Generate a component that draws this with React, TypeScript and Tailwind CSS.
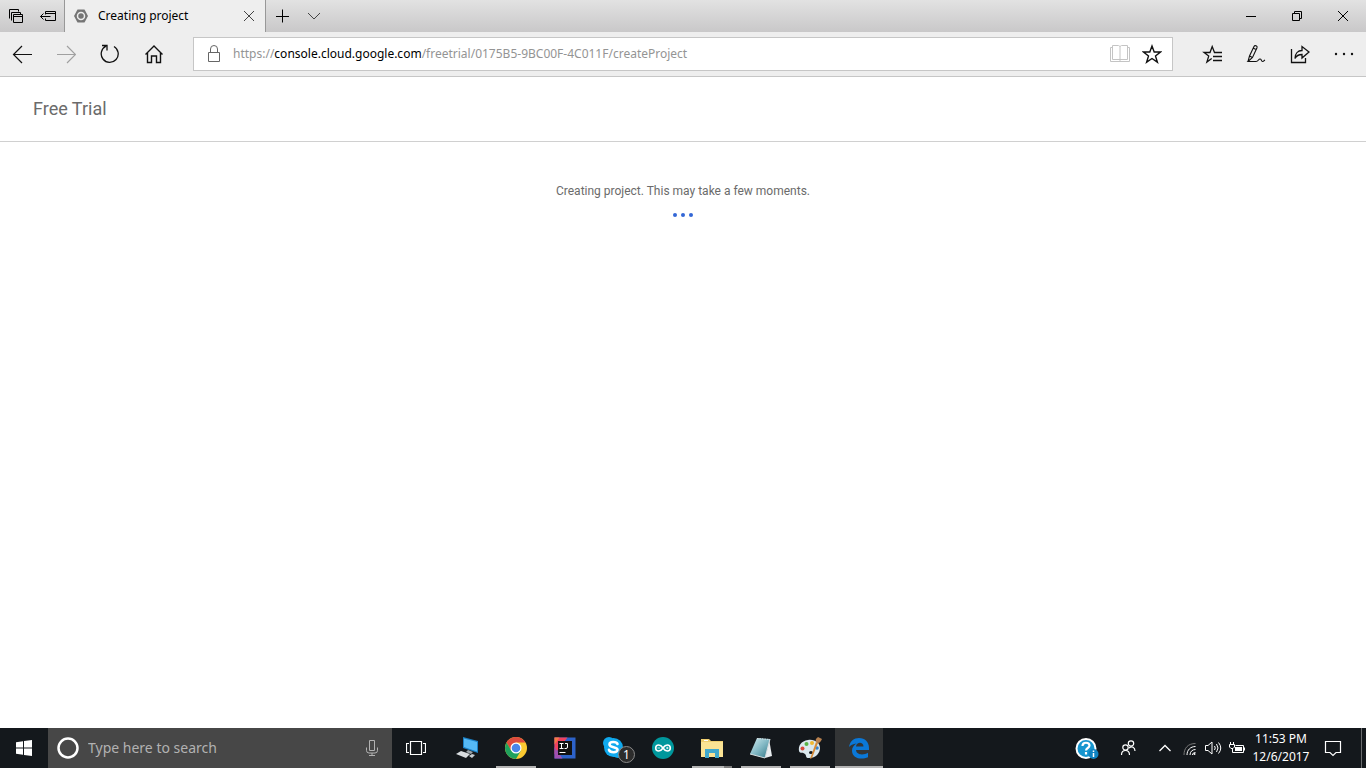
import { ReactNode, useState } from 'react';

type IconProps = { w?: number; h?: number; className?: string; children: ReactNode };

function Icon({ w = 20, h = 20, className = '', children }: IconProps) {
  return (
    <svg
      width={w}
      height={h}
      viewBox={`0 0 ${w} ${h}`}
      fill="none"
      stroke="currentColor"
      className={`shrink-0 ${className}`}
      aria-hidden="true"
    >
      {children}
    </svg>
  );
}

type ButtonProps = { label: string; className?: string; children: ReactNode };

function IconButton({ label, className = '', children }: ButtonProps) {
  return (
    <button aria-label={label} className={`flex items-center justify-center shrink-0 ${className}`}>
      {children}
    </button>
  );
}

function TabBar() {
  return (
    <div className="flex h-8 bg-linear-to-b from-[#e2e2e2] to-[#c9c8c9] text-black">
      <IconButton label="Tabs you've set aside" className="w-8">
        <Icon w={16} h={16}>
          <path d="M1.500 10.500v-9h9v2M3.500 12.500v-8h9v2" />
          <path d="M5.500 6.500h9v8h-9zM5.500 8.500h9" />
        </Icon>
      </IconButton>
      <IconButton label="Set these tabs aside" className="w-8">
        <Icon w={16} h={16}>
          <path d="M5.500 6.500V3.500h10v9h-10V10.500M5.500 5.500h10M.5 8.500h10M3.500 5.500l-3 3 3 3" />
        </Icon>
      </IconButton>
      <div className="flex items-center w-[202px] pl-2 border-x border-[#989898] bg-[#eeeeee]">
        <Icon w={16} h={16} className="mr-[9px]">
          <path d="M4.500 1.500h7L15 8l-3.500 6.500h-7L1 8z" fill="#757575" stroke="none" />
          <circle cx="8" cy="8" r="3.500" stroke="#eee" strokeWidth="1.500" />
          <circle cx="8" cy="8" r="1.500" fill="#757575" stroke="none" />
        </Icon>
        <span className="grow text-[12px] leading-4 whitespace-nowrap">Creating project</span>
        <IconButton label="Close tab" className="w-8 h-8">
          <Icon w={12} h={12} className="text-[#444]">
            <path d="M1 1l10 10M11 1L1 11" />
          </Icon>
        </IconButton>
      </div>
      <IconButton label="New tab" className="w-8">
        <Icon w={14} h={14}>
          <path d="M7.500 .5v13M1 7.500h13" />
        </Icon>
      </IconButton>
      <IconButton label="Show tab previews" className="w-8">
        <Icon w={14} h={8} className="text-[#444]">
          <path d="M1 1l6 6 6-6" />
        </Icon>
      </IconButton>
      <div className="flex ml-auto">
        <IconButton label="Minimize" className="w-[46px]">
          <Icon w={10} h={10}>
            <path d="M0 5.500h10" />
          </Icon>
        </IconButton>
        <IconButton label="Restore" className="w-[46px]">
          <Icon w={10} h={10}>
            <path d="M.5 2.500h7v7h-7zM2.500 2.500v-2h7v7h-2" />
          </Icon>
        </IconButton>
        <IconButton label="Close" className="w-[46px]">
          <Icon w={12} h={12}>
            <path d="M1 1l10 10M11 1L1 11" />
          </Icon>
        </IconButton>
      </div>
    </div>
  );
}

function Toolbar() {
  return (
    <div className="flex items-center h-[45px] border-b border-[#c6c6c6] bg-[#eeeeee] text-[#111]">
      <IconButton label="Back" className="w-11 h-11">
        <Icon>
          <path d="M1.500 10.500H20M10 2l-8.500 8.500L10 19" strokeWidth="1.200" />
        </Icon>
      </IconButton>
      <IconButton label="Forward" className="w-11 h-11 text-[#a0a0a0]">
        <Icon>
          <path d="M1 10.500h18.500M11 2l8.500 8.500L11 19" strokeWidth="1.200" />
        </Icon>
      </IconButton>
      <IconButton label="Refresh" className="w-11 h-11">
        <Icon>
          <path d="M14 2.500a8.500 8.500 0 1 1-8-.3M2 1.500h5v5" strokeWidth="1.300" />
        </Icon>
      </IconButton>
      <IconButton label="Home" className="w-11 h-11">
        <Icon>
          <path
            d="M1.500 10.500L10 2l8.500 8.500M3.500 9v9.500h4V12h5v6.500h4V9"
            strokeWidth="1.400"
          />
        </Icon>
      </IconButton>

      <div className="flex items-center grow h-[34px] mx-[17px] pl-3 pr-1 border border-[#c6c6c6] bg-white">
        <Icon w={16} h={20} className="mr-[11px] text-[#666]">
          <path d="M2.500 8.500h11v9h-11zM4.500 8.500V5a3.500 3.500 0 0 1 7 0v3.500" />
        </Icon>
        <a
          href="https://console.cloud.google.com/freetrial/0175B5-9BC00F-4C011F/createProject"
          className="grow text-[12px] leading-4 text-[#949494] whitespace-nowrap"
        >
          https://<span className="text-black">console.cloud.google.com</span>
          /freetrial/0175B5-9BC00F-4C011F/createProject
        </a>
        <IconButton label="Reading view" className="w-8 h-8 text-[#c4c4c4]">
          <Icon>
            <path d="M2.500 1.500h6l1.500 1 1.500-1h6v14h-15zM10 2.500v15M2.500 3.500h-2v14h19v-14h-2" />
          </Icon>
        </IconButton>
        <IconButton label="Add to favorites" className="w-8 h-8">
          <Icon>
            <path
              d="M10 2l2.200 6h6.300l-5 4 1.900 6.200L10 14.500l-5.400 3.700L6.500 12l-5-4h6.300z"
              strokeWidth="1.400"
            />
          </Icon>
        </IconButton>
      </div>

      <IconButton label="Hub" className="w-11 h-11">
        <Icon>
          <path
            d="M20 8.500h-7.500L10.200 2.500 8 8.500H2l4.700 3.600-1.800 6 4.800-3.600M11 12.500h9M11 16.500h9"
            strokeWidth="1.300"
          />
        </Icon>
      </IconButton>
      <IconButton label="Make a web note" className="w-11 h-11">
        <Icon>
          <path
            d="M2 17.500L3.500 12 8 2.500c.8-1.600 3.700-.6 3 1.300L6.500 13.500 2 17.500h8c2.500 0 2.500-3 4.200-2.500s.8 2.500 2.300 2.500 1.500-1 2.500-1.500M7.300 4.300l2.900 1.300M3.500 12l3 1.500"
            strokeWidth="1.100"
          />
        </Icon>
      </IconButton>
      <IconButton label="Share" className="w-11 h-11">
        <Icon>
          <path
            d="M1.500 5v13.500h14V14M5 14.500C5 9.500 8 6.500 12 6.500V2.500l7 5.500-7 6v-3.500c-3 0-5.500 1-7 4z"
            strokeWidth="1.300"
          />
        </Icon>
      </IconButton>
      <IconButton label="More" className="w-11 h-11">
        <Icon>
          <g fill="currentColor" stroke="none">
            <circle cx="2" cy="10" r="1.200" />
            <circle cx="10" cy="10" r="1.200" />
            <circle cx="18" cy="10" r="1.200" />
          </g>
        </Icon>
      </IconButton>
    </div>
  );
}

function TrialPage() {
  return (
    <main className="grow bg-white font-[Roboto,sans-serif] text-[#6b6b6b]">
      <header className="flex items-center h-[65px] px-[33px] border-b border-[#d0d0d0]">
        <h1 className="text-[18px] leading-6">Free Trial</h1>
      </header>
      <div className="flex flex-col items-center pt-10">
        <p className="text-[12px] leading-[18px]">Creating project. This may take a few moments.</p>
        <div className="flex gap-1 mt-[13px]" role="progressbar" aria-label="Creating project">
          <span className="size-1 rounded-full bg-[#3367d6]" />
          <span className="size-1 rounded-full bg-[#3367d6]" />
          <span className="size-1 rounded-full bg-[#3367d6]" />
        </div>
      </div>
    </main>
  );
}

function ComputerIcon() {
  return (
    <Icon w={24} h={24}>
      <g stroke="none">
        <path d="M8 1l15 4v12L8 12z" fill="#1b7fc4" />
        <path d="M9 2.500l13 3.500v9.500L9 11z" fill="#55b9f5" />
        <path d="M13 14l5 2-2 2-5-2z" fill="#9aa4ab" />
        <path d="M1 18l5-3 9 3-4 4z" fill="#d9dde0" />
        <path d="M14 20l3-2 3 1-3 3z" fill="#c5cbd0" />
      </g>
    </Icon>
  );
}

function ChromeIcon() {
  return (
    <Icon w={24} h={24}>
      <g stroke="none">
        <circle cx="12" cy="12" r="11" fill="#fbc931" />
        <path d="M2.500 6.500A11 11 0 0 1 21.500 6.500H12L7.200 14.800z" fill="#dd4b3e" />
        <path d="M2.500 6.500A11 11 0 0 0 12 23l4.800-8.300H7.200z" fill="#1fa15d" />
        <circle cx="12" cy="12" r="5.500" fill="#fff" />
        <circle cx="12" cy="12" r="4.300" fill="#4a86e8" />
      </g>
    </Icon>
  );
}

function IntelliJIcon() {
  return (
    <Icon w={24} h={24}>
      <g stroke="none">
        <path d="M1.500 1.500h21v21h-21z" fill="#2d62c9" />
        <path d="M1.500 1.500h13l-13 17z" fill="#f0425f" />
        <path d="M1.500 11l8 11.500h-8z" fill="#a04fb0" />
        <path d="M1.500 1.500h5l-5 7z" fill="#f47b43" />
        <path d="M5 5h14v14H5z" fill="#111" />
      </g>
      <path d="M6.500 7.500h4M8.500 7.500v5M6.500 12.500h4M12 7.500h2.500V11q0 1.500-1.500 1.500h-1.500" stroke="#fff" />
      <path d="M6.500 16.500h6" stroke="#fff" />
    </Icon>
  );
}

function SkypeIcon() {
  return (
    <span className="relative flex">
      <Icon w={24} h={24}>
        <g stroke="none" fill="#10a9ee">
          <circle cx="11.500" cy="11.500" r="9.500" />
          <circle cx="7" cy="7" r="6" />
          <circle cx="16" cy="16" r="6" />
        </g>
        <path
          d="M15.500 8c-1-2.500-8-2.800-8 .5 0 3.500 8 2 8 5.300 0 3.500-7.500 3-8.500 0"
          stroke="#fff"
          strokeWidth="2.600"
          strokeLinecap="round"
        />
      </Icon>
      <span className="absolute left-4 top-2.5 flex items-center justify-center size-[17px] rounded-full border border-[#8a8a8a] bg-[#2c2c2c] text-[12px] leading-none text-white">
        1
      </span>
    </span>
  );
}

function ArduinoIcon() {
  return (
    <Icon w={24} h={24}>
      <circle cx="12" cy="12" r="11" fill="#00979c" stroke="none" />
      <path
        d="M12 12C10 9 9 9 7.700 9a3 3 0 0 0 0 6C9 15 10 15 12 12s3-3 4.300-3a3 3 0 0 1 0 6C15 15 14 15 12 12z"
        stroke="#fff"
        strokeWidth="1.600"
      />
      <path d="M6.500 12h2.500M15 12h2.500M16.300 10.800v2.400" stroke="#fff" strokeWidth=".8" />
    </Icon>
  );
}

function ExplorerIcon() {
  return (
    <Icon w={24} h={24}>
      <g stroke="none">
        <path d="M1 3h8l2 2h12v16H1z" fill="#f0cf70" />
        <path d="M1 6h22v15H1z" fill="#fbe394" />
        <path d="M4 4h4v1H4z" fill="#fff" />
        <path d="M5 13h14v9h-4v-5H9v5H5z" fill="#41a9cd" />
      </g>
    </Icon>
  );
}

function NotepadIcon() {
  return (
    <Icon w={24} h={24}>
      <defs>
        <linearGradient id="sheet" x1="0" y1="0" x2="1" y2="1">
          <stop offset="0" stopColor="#d5eef2" />
          <stop offset=".5" stopColor="#83b9c5" />
          <stop offset="1" stopColor="#2f7585" />
        </linearGradient>
      </defs>
      <g stroke="none">
        <path d="M20 3l3 17-7 2z" fill="#e9edf0" />
        <path d="M8 2l13 1-5 19-15-4z" fill="url(#sheet)" />
      </g>
      <path d="M8 2.500l13 1" stroke="#d7dfe2" strokeDasharray="1.500 1" />
      <path d="M1 18l15 4 5-19" stroke="#d7dfe2" />
    </Icon>
  );
}

function PaintIcon() {
  return (
    <Icon w={26} h={24}>
      <g stroke="none">
        <path
          d="M11 4C4 5 1 10 2 15c1 3 4 1 6 3s0 4 4 4c7 0 11-5 11-10S18 3 11 4zM14 15a2 1.500 0 1 1 0 3 2 1.500 0 0 1 0-3z"
          fill="#dbe8ee"
          fillRule="evenodd"
        />
        <circle cx="5.500" cy="12.500" r="2" fill="#d9483b" />
        <circle cx="9.500" cy="8" r="2" fill="#59b347" />
        <circle cx="15" cy="7" r="2" fill="#f0b731" />
        <circle cx="20" cy="12" r="1.800" fill="#3484ce" />
        <path d="M19 6l2 1-6 15-2 1z" fill="#d58a38" />
        <path d="M19 6c-1-3 1-4 2-5l4 2c-1 2-2 4-4 4z" fill="#b8814f" />
      </g>
    </Icon>
  );
}

function EdgeIcon() {
  return (
    <Icon w={24} h={24}>
      <path
        d="M2 11C3 5 7 2 12 2c6 0 10 4 10 10v2H9c.3 5 7.500 5.500 12 2.700v4.500C15 24 5 23 5 14.500c0-3 2-5.500 4.500-7C6 8 3.500 9 2 11zM9 10.500h7.500C16.500 5.500 9.500 5.500 9 10.500z"
        fill="#0b78d7"
        stroke="none"
      />
    </Icon>
  );
}

const apps = [
  { name: 'This PC', icon: <ComputerIcon />, running: false },
  { name: 'Google Chrome', icon: <ChromeIcon />, running: true },
  { name: 'IntelliJ IDEA', icon: <IntelliJIcon />, running: false },
  { name: 'Skype', icon: <SkypeIcon />, running: false },
  { name: 'Arduino', icon: <ArduinoIcon />, running: false },
  { name: 'File Explorer', icon: <ExplorerIcon />, running: true, stacked: true },
  { name: 'Notepad', icon: <NotepadIcon />, running: true },
  { name: 'Paint', icon: <PaintIcon />, running: true },
  { name: 'Microsoft Edge', icon: <EdgeIcon />, running: true, active: true },
];

function Tray() {
  return (
    <div className="flex items-center h-10 ml-auto text-white">
      <IconButton label="Help" className="w-8 h-10">
        <Icon w={24} h={24}>
          <circle cx="11" cy="12.500" r="9.500" fill="#1796cf" stroke="#fff" strokeWidth="2" />
          <path d="M7.500 10c0-4.500 7-4 7-.5 0 2.500-3.500 2.500-3.500 5M11 16v2.500" stroke="#fff" strokeWidth="2.200" />
          <circle cx="18.500" cy="18" r="5" fill="#0f83c2" stroke="none" />
          <path d="M18.500 14.500V16M18.500 17v4" stroke="#fff" strokeWidth="1.500" />
        </Icon>
      </IconButton>
      <IconButton label="People" className="w-[50px] h-10">
        <Icon w={16} h={16}>
          <circle cx="11" cy="3.500" r="2.700" strokeWidth="1.200" />
          <circle cx="5.500" cy="7.500" r="2.700" strokeWidth="1.200" />
          <path d="M1.500 15c0-6 8-6 8 0M9 8c3-2.500 6-.5 6 3" strokeWidth="1.200" />
        </Icon>
      </IconButton>
      <IconButton label="Show hidden icons" className="w-6 h-10">
        <Icon w={14} h={8}>
          <path d="M1.500 7L7 1.500 12.500 7" strokeWidth="1.300" />
        </Icon>
      </IconButton>
      <IconButton label="Network" className="w-6 h-10">
        <Icon w={14} h={14}>
          <path d="M2 14C2 7 6 2.500 13.500 2.500" stroke="#777" />
          <path d="M5 14c0-5 3.500-8.500 8.500-8.500M8 14c0-3.500 2.500-5.500 5.500-5.500M10.500 14c0-1.500 1-2.500 3-2.500" />
          <circle cx="12.500" cy="13" r="1" fill="#fff" stroke="none" />
        </Icon>
      </IconButton>
      <IconButton label="Volume" className="w-6 h-10">
        <Icon w={18} h={14}>
          <path d="M1.500 4.500h2.500l4-3.500v12l-4-3.500H1.500zM10.500 5q1.500 2 0 4M12.500 3q3 4 0 8M14.500 1.500q4.500 5.500 0 11" />
        </Icon>
      </IconButton>
      <IconButton label="Battery" className="w-6 h-10">
        <Icon w={16} h={14}>
          <path d="M6.500 4.500h8v7H3.500V7.500M15.500 6.500v3M1.500 1v2M4.500 1v2M.5 3.500h5V6L4 7.500H2L.5 6z" />
          <path d="M6 6h7v4H6z" fill="#fff" stroke="none" />
        </Icon>
      </IconButton>
      <button className="w-16 h-10 text-center text-[12px] leading-[18px] whitespace-nowrap">
        <time dateTime="2017-12-06T23:53" className="block">
          11:53 PM
          <br />
          12/6/2017
        </time>
      </button>
      <IconButton label="Notifications" className="w-10 h-10">
        <Icon w={18} h={18}>
          <path d="M1.500 2.500h15v11H12l-3 3-3-3H1.500z" strokeWidth="1.200" />
        </Icon>
      </IconButton>
      <button aria-label="Show desktop" className="w-[5px] h-10 ml-2 border-l border-[#6a6c6e]" />
    </div>
  );
}

function Taskbar() {
  const [query, setQuery] = useState('');

  return (
    <footer className="flex items-center h-10 bg-[#14181c] text-white">
      <IconButton label="Start" className="w-12 h-10">
        <Icon w={16} h={16}>
          <path
            d="M0 2.300l7-1v6.200H0zM8 1.100L16 0v7.500H8zM0 8.500h7v6.200l-7-1zM8 8.500h8V16l-8-1.100z"
            fill="#fff"
            stroke="none"
          />
        </Icon>
      </IconButton>
      <div className="flex items-center w-[344px] h-10 pl-2 pr-3 bg-[#474747]">
        <Icon w={24} h={24} className="mr-2">
          <circle cx="12" cy="12" r="9.500" stroke="#fff" strokeWidth="2.500" />
        </Icon>
        <input
          type="text"
          aria-label="Search"
          placeholder="Type here to search"
          value={query}
          onChange={(e) => setQuery(e.target.value)}
          className="grow min-w-0 bg-transparent text-[14px] leading-5 outline-none placeholder:text-[#b2b2b2]"
        />
        <IconButton label="Speak to search" className="text-[#b2b2b2]">
          <Icon w={16} h={18}>
            <path d="M5.500 1.500h5v10h-5zM2.500 8.500v3q0 2.500 2.500 2.500h6q2.500 0 2.500-2.500v-3M8 14v2.500M5 16.500h6" />
          </Icon>
        </IconButton>
      </div>
      <IconButton label="Task view" className="w-12 h-10">
        <Icon w={20} h={16}>
          <path d="M4.500 1.500h11v13h-11zM3 3.500H.5v9H3M17 3.500h2.500v9H17" strokeWidth="1.200" />
        </Icon>
      </IconButton>

      <nav className="flex gap-px ml-[3px]" aria-label="Apps">
        {apps.map((app) => (
          <button
            key={app.name}
            aria-label={app.name}
            className={`relative flex items-center justify-center w-12 h-10 ${app.active ? 'bg-[#333536]' : ''}`}
          >
            {app.icon}
            {app.running && (
              <span
                className={`absolute bottom-0 h-0.5 bg-[#b4b4b4] ${
                  app.active ? 'inset-x-0' : app.stacked ? 'left-1 right-3' : 'inset-x-1'
                }`}
              />
            )}
            {app.stacked && <span className="absolute bottom-0 right-1 w-2 h-0.5 bg-[#7c7c7c]" />}
          </button>
        ))}
      </nav>

      <Tray />
    </footer>
  );
}

export default function App() {
  return (
    <div className="flex flex-col min-h-screen font-['Noto_Sans','Open_Sans',sans-serif]">
      <TabBar />
      <Toolbar />
      <TrialPage />
      <Taskbar />
    </div>
  );
}
